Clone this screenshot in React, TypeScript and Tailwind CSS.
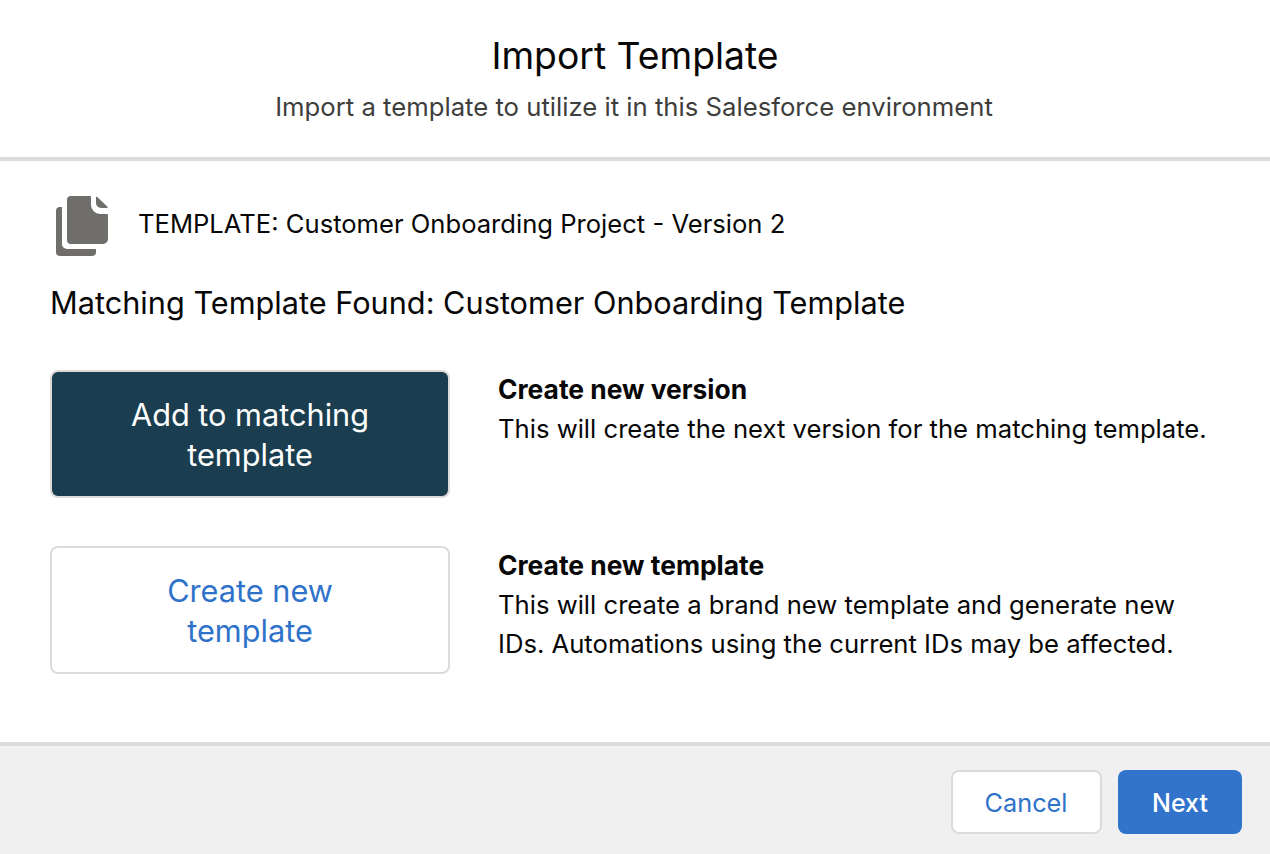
const FONT = "font-['Inter','Liberation_Sans',sans-serif]";

function TemplateIcon() {
  return (
    <svg className="w-[52px] h-[60px] shrink-0" viewBox="0 0 52 60" fill="#706e6b">
      {/* back sheet */}
      <path d="M6 11H4a4 4 0 0 0-4 4v41a4 4 0 0 0 4 4h32a4 4 0 0 0 4-4v-3H11a5 5 0 0 1-5-5z" />
      {/* front sheet */}
      <path d="M15 0h19a1 1 0 0 1 1 1v8a9 9 0 0 0 9 9h7a1 1 0 0 1 1 1v24a5 5 0 0 1-5 5H15a4 4 0 0 1-4-4V4a4 4 0 0 1 4-4z" />
      {/* folded corner */}
      <path d="M40 1.500a.8.800 0 0 1 1.300-.5l10.200 9.700a.8.800 0 0 1-.5 1.300h-6a5 5 0 0 1-5-5z" />
    </svg>
  );
}

function Choice({
  label,
  title,
  lines,
  selected,
}: {
  label: string[];
  title: string;
  lines: string[];
  selected?: boolean;
}) {
  return (
    <div className="flex gap-[48px]">
      <button
        className={`w-[400px] h-[128px] shrink-0 rounded-[8px] border-2 border-[#dddbda] pt-[2px] text-[30.700px] leading-[40px] ${
          selected ? 'bg-[#1a3e50] text-white' : 'bg-white text-[#2f72ca]'
        }`}
      >
        {label.map((l) => (
          <span key={l} className="block">
            {l}
          </span>
        ))}
      </button>
      <div className="text-[25.650px] leading-[39px] text-[#080707]">
        <div className="font-bold text-[26.400px]">{title}</div>
        {lines.map((l) => (
          <div key={l}>{l}</div>
        ))}
      </div>
    </div>
  );
}

export default function App() {
  return (
    <div className={`${FONT} w-[1270px] h-[854px] flex flex-col bg-white text-[#080707] overflow-hidden`}>
      {/* Header */}
      <header className="h-[161px] shrink-0 border-b-4 border-[#dddbda] flex flex-col items-center pt-[32px]">
        <h1 className="text-[37.300px] leading-[48px]">Import Template</h1>
        <p className="text-[25.700px] leading-[36px] mt-[9px] pr-[2px] text-[#3e3e3c]">
          Import a template to utilize it in this Salesforce environment
        </p>
      </header>

      {/* Body */}
      <main className="flex-1 pl-[50px] pr-[50px]">
        <div className="flex items-center gap-[30px] mt-[35px] pl-[6px]">
          <TemplateIcon />
          <span className="text-[25.600px] leading-[36px] pb-[4px]">
            TEMPLATE: Customer Onboarding Project - Version 2
          </span>
        </div>
        <h2 className="text-[30.700px] leading-[40px] mt-[27px]">
          Matching Template Found: Customer Onboarding Template
        </h2>
        <div className="flex flex-col gap-[48px] mt-[47px]">
          <Choice
            selected
            label={['Add to matching', 'template']}
            title="Create new version"
            lines={['This will create the next version for the matching template.']}
          />
          <Choice
            label={['Create new', 'template']}
            title="Create new template"
            lines={[
              'This will create a brand new template and generate new',
              'IDs. Automations using the current IDs may be affected.',
            ]}
          />
        </div>
      </main>

      {/* Footer */}
      <footer className="h-[112px] shrink-0 border-t-4 border-[#dddbda] bg-[#f1f0f0] flex items-start justify-end gap-[16px] pt-[24px] pr-[28px]">
        <button className="w-[151px] h-[64px] rounded-[8px] border-2 border-[#dddbda] bg-white pt-[2px] pr-[1px] text-[25.300px] text-[#2f72ca]">
          Cancel
        </button>
        <button className="w-[124px] h-[64px] rounded-[8px] bg-[#3273cc] pt-[3px] text-[25px] text-white font-medium">
          Next
        </button>
      </footer>
    </div>
  );
}
